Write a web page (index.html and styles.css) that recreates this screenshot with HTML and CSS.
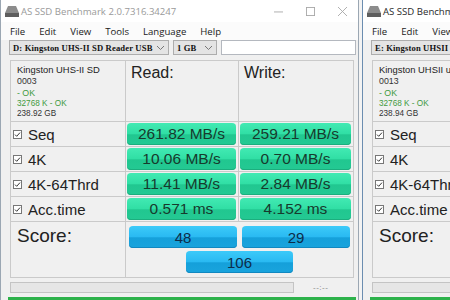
FILE: index.html
```html
<!DOCTYPE html>
<html lang="en">
<head>
    <meta charset="UTF-8">
    <meta name="viewport" content="width=device-width, initial-scale=1.0">
    <title>AS SSD Benchmark</title>
    <link rel="stylesheet" href="styles.css">
</head>
<body>
<div class="desktop">

    <!-- Janela 1 (inativa) -->
    <div class="window">
        <div class="titlebar">
            <svg class="app-icon" viewBox="0 0 14 12"><path d="M3 1h8l3 7H0z" fill="#8c8c8c"/><rect y="8" width="14" height="4" fill="#5e5e5e"/></svg>
            <span class="title">AS SSD Benchmark 2.0.7316.34247</span>
            <div class="controls">
                <span class="ctrl"><svg viewBox="0 0 10 10"><path d="M0 5.5h10" stroke="currentColor"/></svg></span>
                <span class="ctrl"><svg viewBox="0 0 10 10"><rect x=".5" y=".5" width="9" height="9" fill="none" stroke="currentColor"/></svg></span>
                <span class="ctrl"><svg viewBox="0 0 10 10"><path d="M0 0l10 10M10 0L0 10" stroke="currentColor"/></svg></span>
            </div>
        </div>
        <div class="menubar">
            <span>File</span><span>Edit</span><span>View</span><span>Tools</span><span>Language</span><span>Help</span>
        </div>
        <div class="toolbar">
            <div class="combo drive"><span>D: Kingston UHS-II SD Reader USB</span><svg class="chev" viewBox="0 0 7 4"><path d="M0 0l3.5 3.5L7 0" fill="none" stroke="#777"/></svg></div>
            <div class="combo size"><span>1 GB</span><svg class="chev" viewBox="0 0 7 4"><path d="M0 0l3.5 3.5L7 0" fill="none" stroke="#777"/></svg></div>
            <div class="textbox"></div>
        </div>

        <div class="results">
            <div class="cell info">
                <div class="dev-name">Kingston UHS-II SD</div>
                <div class="small">0003</div>
                <div class="small ok">- OK</div>
                <div class="tiny ok">32768 K - OK</div>
                <div class="tiny">238.92 GB</div>
            </div>
            <div class="cell head">Read:</div>
            <div class="cell head">Write:</div>

            <div class="cell label"><svg class="check" viewBox="0 0 9 9"><rect x=".5" y=".5" width="8" height="8" fill="#fff" stroke="#777"/><path d="M2 4.6l1.7 1.7L7 2.6" fill="none" stroke="#333"/></svg>Seq</div>
            <div class="cell"><div class="bar green">261.82 MB/s</div></div>
            <div class="cell"><div class="bar green">259.21 MB/s</div></div>

            <div class="cell label"><svg class="check" viewBox="0 0 9 9"><rect x=".5" y=".5" width="8" height="8" fill="#fff" stroke="#777"/><path d="M2 4.6l1.7 1.7L7 2.6" fill="none" stroke="#333"/></svg>4K</div>
            <div class="cell"><div class="bar green">10.06 MB/s</div></div>
            <div class="cell"><div class="bar green">0.70 MB/s</div></div>

            <div class="cell label"><svg class="check" viewBox="0 0 9 9"><rect x=".5" y=".5" width="8" height="8" fill="#fff" stroke="#777"/><path d="M2 4.6l1.7 1.7L7 2.6" fill="none" stroke="#333"/></svg>4K-64Thrd</div>
            <div class="cell"><div class="bar green">11.41 MB/s</div></div>
            <div class="cell"><div class="bar green">2.84 MB/s</div></div>

            <div class="cell label"><svg class="check" viewBox="0 0 9 9"><rect x=".5" y=".5" width="8" height="8" fill="#fff" stroke="#777"/><path d="M2 4.6l1.7 1.7L7 2.6" fill="none" stroke="#333"/></svg>Acc.time</div>
            <div class="cell"><div class="bar green">0.571 ms</div></div>
            <div class="cell"><div class="bar green">4.152 ms</div></div>

            <div class="cell score-label">Score:</div>
            <div class="cell score">
                <div class="score-top">
                    <div class="bar blue">48</div>
                    <div class="bar blue">29</div>
                </div>
                <div class="bar blue total">106</div>
            </div>
        </div>

        <div class="status">
            <div class="progress"></div>
            <span class="eta">--:--</span>
        </div>
        <div class="done"></div>
    </div>

    <!-- Janela 2 (ativa, cortada pela borda) -->
    <div class="window active">
        <div class="titlebar">
            <svg class="app-icon" viewBox="0 0 14 12"><path d="M3 1h8l3 7H0z" fill="#8c8c8c"/><rect y="8" width="14" height="4" fill="#5e5e5e"/></svg>
            <span class="title">AS SSD Benchmark 2.0.7316.34247</span>
        </div>
        <div class="menubar">
            <span>File</span><span>Edit</span><span>View</span><span>Tools</span><span>Language</span><span>Help</span>
        </div>
        <div class="toolbar">
            <div class="combo drive"><span>E: Kingston UHSII uSD Reader</span><svg class="chev" viewBox="0 0 7 4"><path d="M0 0l3.5 3.5L7 0" fill="none" stroke="#777"/></svg></div>
            <div class="combo size"><span>1 GB</span><svg class="chev" viewBox="0 0 7 4"><path d="M0 0l3.5 3.5L7 0" fill="none" stroke="#777"/></svg></div>
            <div class="textbox"></div>
        </div>

        <div class="results">
            <div class="cell info">
                <div class="dev-name">Kingston UHSII uSD Reader</div>
                <div class="small">0013</div>
                <div class="small ok">- OK</div>
                <div class="tiny ok">32768 K - OK</div>
                <div class="tiny">238.94 GB</div>
            </div>
            <div class="cell head">Read:</div>
            <div class="cell head">Write:</div>

            <div class="cell label"><svg class="check" viewBox="0 0 9 9"><rect x=".5" y=".5" width="8" height="8" fill="#fff" stroke="#777"/><path d="M2 4.6l1.7 1.7L7 2.6" fill="none" stroke="#333"/></svg>Seq</div>
            <div class="cell"><div class="bar green">258.40 MB/s</div></div>
            <div class="cell"><div class="bar green">241.77 MB/s</div></div>

            <div class="cell label"><svg class="check" viewBox="0 0 9 9"><rect x=".5" y=".5" width="8" height="8" fill="#fff" stroke="#777"/><path d="M2 4.6l1.7 1.7L7 2.6" fill="none" stroke="#333"/></svg>4K</div>
            <div class="cell"><div class="bar green">9.87 MB/s</div></div>
            <div class="cell"><div class="bar green">0.68 MB/s</div></div>

            <div class="cell label"><svg class="check" viewBox="0 0 9 9"><rect x=".5" y=".5" width="8" height="8" fill="#fff" stroke="#777"/><path d="M2 4.6l1.7 1.7L7 2.6" fill="none" stroke="#333"/></svg>4K-64Thrd</div>
            <div class="cell"><div class="bar green">11.02 MB/s</div></div>
            <div class="cell"><div class="bar green">2.71 MB/s</div></div>

            <div class="cell label"><svg class="check" viewBox="0 0 9 9"><rect x=".5" y=".5" width="8" height="8" fill="#fff" stroke="#777"/><path d="M2 4.6l1.7 1.7L7 2.6" fill="none" stroke="#333"/></svg>Acc.time</div>
            <div class="cell"><div class="bar green">0.598 ms</div></div>
            <div class="cell"><div class="bar green">4.310 ms</div></div>

            <div class="cell score-label">Score:</div>
            <div class="cell score">
                <div class="score-top">
                    <div class="bar blue">47</div>
                    <div class="bar blue">28</div>
                </div>
                <div class="bar blue total">102</div>
            </div>
        </div>

        <div class="status">
            <div class="progress"></div>
            <span class="eta">--:--</span>
        </div>
        <div class="done"></div>
    </div>

</div>
</body>
</html>
```

FILE: styles.css
```css
/* Geral */
* {
    box-sizing: border-box;
}

body {
    margin: 0;
    background-color: #f3f3f3;
    font-family: "Liberation Sans", Arial, sans-serif;
    color: #222;
}

.desktop {
    display: flex;
    gap: 3px;
    width: 450px;
    height: 300px;
    overflow: hidden;
}

/* Janela */
.window {
    flex: 0 0 359px;
    height: 300px;
    background-color: #f0f0f0;
    border-left: 1px solid #9ba7b3;
    border-right: 1px solid #9ba7b3;
    overflow: hidden;
}

.window.active {
    border-color: #6b8db0;
}

/* Barra de título */
.titlebar {
    height: 22px;
    background-color: #fff;
    display: flex;
    align-items: center;
    padding-left: 4px;
}

.app-icon {
    width: 14px;
    height: 12px;
    margin-right: 2px;
    flex-shrink: 0;
}

.title {
    font-family: "Open Sans", sans-serif;
    font-size: 9.6px;
    color: #9a9a9a;
    white-space: nowrap;
}

.active .title {
    color: #2a2a2a;
}

.controls {
    margin-left: auto;
    display: flex;
    color: #a8a8a8;
}

.ctrl {
    width: 32px;
    height: 22px;
    display: flex;
    align-items: center;
    justify-content: center;
}

.ctrl svg {
    width: 9px;
    height: 9px;
}

/* Menu */
.menubar {
    height: 18px;
    background-color: #fbfbfb;
    display: flex;
    align-items: center;
    gap: 14px;
    padding-left: 9px;
    font-family: "Open Sans", sans-serif;
    font-size: 9.6px;
    color: #1a1a1a;
}

/* Barra de ferramentas */
.toolbar {
    height: 17px;
    display: flex;
    align-items: flex-start;
    gap: 4px;
    padding-left: 8px;
}

.combo {
    height: 15px;
    display: flex;
    align-items: center;
    justify-content: space-between;
    padding: 0 4px 0 3px;
    background-color: #e4e4e4;
    border: 1px solid #adadad;
    font-family: "Liberation Serif", serif;
    font-weight: bold;
    font-size: 8.6px;
    letter-spacing: 0.15px;
    white-space: nowrap;
    color: #111;
}

.combo.drive {
    width: 160px;
}

.combo.size {
    width: 44px;
}

.chev {
    width: 7px;
    height: 4px;
    flex-shrink: 0;
}

.textbox {
    width: 135px;
    height: 15px;
    background-color: #fff;
    border: 1px solid #b4b8bf;
    flex-shrink: 0;
}

/* Tabela de resultados */
.results {
    margin: 3px 0 0 9px;
    width: 344px;
    display: grid;
    grid-template-columns: 114px 112px 114px;
    grid-template-rows: 60px 24px 24px 24px 24px 55px;
    gap: 1px;
    background-color: #cacaca;
    border: 1px solid #cacaca;
}

.cell {
    background-color: #f0f0f0;
    padding: 1px 2px 1px 1px;
    overflow: hidden;
}

.info {
    padding: 3px 0 0 6px;
    white-space: nowrap;
}

.dev-name {
    font-size: 9.4px;
    line-height: 12px;
}

.small {
    font-size: 8.8px;
    line-height: 11.5px;
    color: #333;
}

.tiny {
    font-size: 8.2px;
    line-height: 10.2px;
    color: #333;
}

.ok {
    color: #3f9a3f;
}

.head {
    padding: 2px 0 0 5px;
    font-size: 16px;
    line-height: 20px;
}

.label {
    display: flex;
    align-items: center;
    padding-left: 2px;
    font-size: 15px;
    white-space: nowrap;
}

.check {
    width: 9px;
    height: 9px;
    margin-right: 6px;
    flex-shrink: 0;
}

.score-label {
    padding: 2px 0 0 6px;
    font-size: 19px;
    line-height: 24px;
}

.score {
    grid-column: span 2;
    padding: 4px 3px 0 3px;
    display: flex;
    flex-direction: column;
    align-items: center;
    gap: 3px;
}

.score-top {
    display: flex;
    gap: 5px;
}

/* Barras */
.bar {
    height: 22px;
    border-radius: 4px;
    display: flex;
    align-items: center;
    justify-content: center;
    font-size: 15.5px;
    white-space: nowrap;
}

.green {
    background: linear-gradient(#42eab3 0%, #31dfa5 48%, #21c790 54%, #24c993 100%);
    color: #173a2d;
    box-shadow: inset 0 -1px 0 #1cae7e;
}

.blue {
    width: 108px;
    background: linear-gradient(#3ccaf9 0%, #2abaf2 48%, #15a0da 54%, #19a4dd 100%);
    color: #0d2d4a;
    box-shadow: inset 0 -1px 0 #1188c0;
    font-size: 15px;
}

.blue.total {
    width: 107px;
}

/* Progresso */
.status {
    display: flex;
    align-items: center;
    margin: 4px 0 0 9px;
}

.progress {
    width: 284px;
    height: 11px;
    background-color: #e6e6e6;
    border: 1px solid #c4c4c4;
}

.eta {
    margin-left: 19px;
    font-size: 8px;
    color: #888;
    letter-spacing: 0.5px;
}

.done {
    margin: 4px 0 0 7px;
    width: 348px;
    height: 6px;
    background-color: #2db24b;
}
```
